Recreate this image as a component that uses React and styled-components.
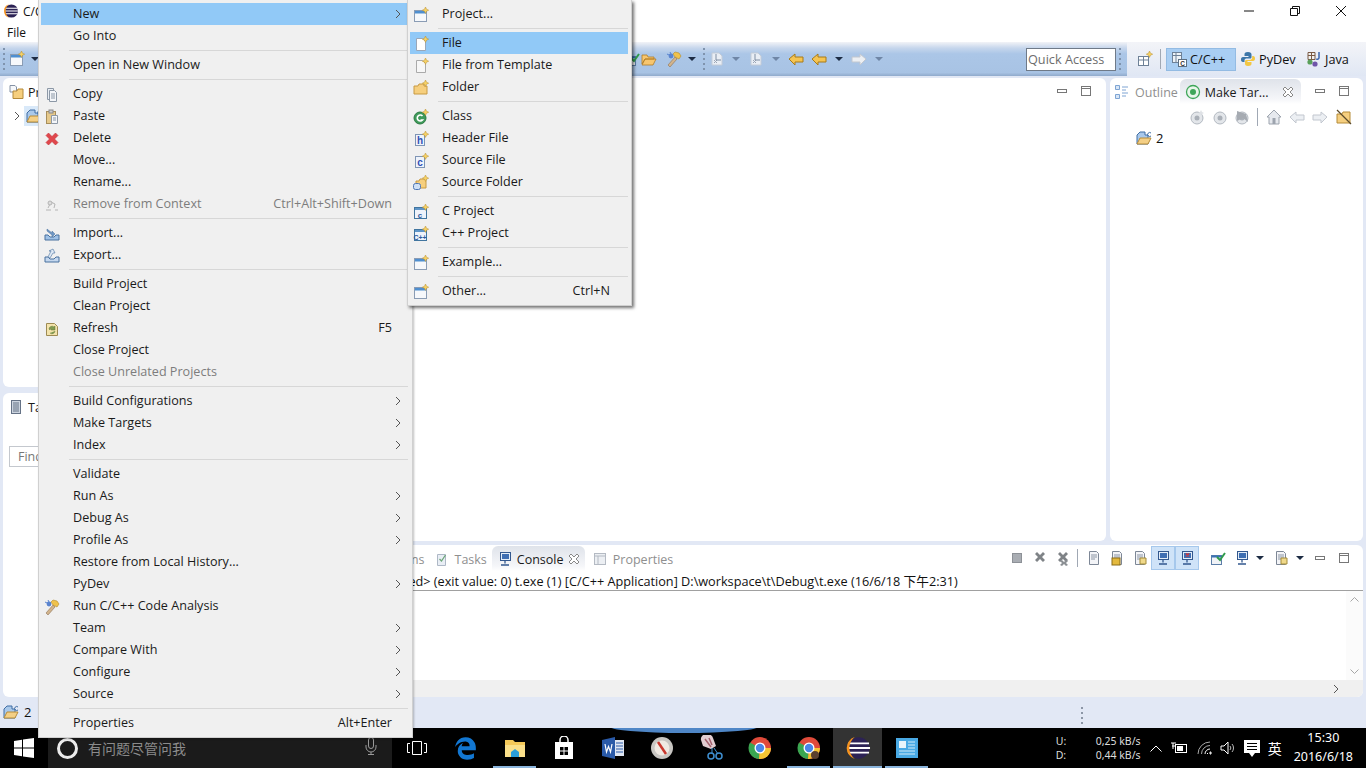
import React from 'react'
import styled, { createGlobalStyle } from 'styled-components'
import { FaEdgeLegacy } from 'react-icons/fa'

const Global = createGlobalStyle`
  html, body { margin: 0; padding: 0; overflow: hidden; }
  body { font-family: "Open Sans", "Noto Sans", "Noto Sans CJK SC", sans-serif; font-size: 12px; color: #111; }
`

/* ---------- drawn icons ---------- */
const Svg = ({ s = 16, children }) => <svg width={s} height={s} viewBox="0 0 16 16" style={{ display: 'block', flex: 'none' }}>{children}</svg>
const Star = () => <path d="M12.5 0l1 2.2 2.2 1-2.2 1-1 2.2-1-2.2-2.2-1 2.2-1z" fill="#f7d264" stroke="#b98f2c" strokeWidth=".5" />
const Wizard = () => <Svg><rect x="1.5" y="3.5" width="12" height="11" fill="#f6f8fb" stroke="#8a9cb4" /><rect x="2" y="4" width="11" height="2.5" fill="#4f8fd0" /><Star /></Svg>
const FileNew = ({ pale }) => <Svg><path d="M3.5 2.5h6l3 3v9h-9z" fill={pale ? '#f7f7f7' : '#fff'} stroke={pale ? '#aaa' : '#9aa7b8'} /><Star /></Svg>
const FolderNew = () => <Svg><path d="M1 6h4l1-2h5v2h3v8H1z" fill="#f6cf7e" stroke="#c89a42" /><Star /></Svg>
const ClassNew = () => <Svg><circle cx="7" cy="9" r="6" fill="#3f9a5a" stroke="#2a7a42" /><path d="M9.5 7a3 3 0 1 0 0 4H7.5" fill="none" stroke="#fff" strokeWidth="1.6" /><Star /></Svg>
const LetterNew = ({ ch }) => <Svg><rect x="2.5" y="3.5" width="9" height="11" fill="#eef3fb" stroke="#7f95b5" /><text x="7" y="13" fontSize="10" fontWeight="700" fontFamily="Liberation Sans" textAnchor="middle" fill="#2f4fb5">{ch}</text><Star /></Svg>
const SourceFolder = () => <Svg><path d="M3 6h3l1-2h6v9H3z" fill="#f6cf7e" stroke="#c89a42" /><rect x=".5" y="8.5" width="7" height="6" rx="2" fill="#cfe0f5" stroke="#4d76b5" /><Star /></Svg>
const CProject = ({ ch }) => <Svg><rect x="1.5" y="3.5" width="12" height="11" fill="#eef3fb" stroke="#41759f" /><rect x="2" y="4" width="11" height="2" fill="#5e95c8" /><text x="7" y="13.5" fontSize={ch.length > 1 ? 7 : 8} fontWeight="700" fontFamily="Liberation Sans" textAnchor="middle" fill="#2d5a9e">{ch}</text><Star /></Svg>
const Copy = () => <Svg><path d="M3.5 1.5h6v11h-6z" fill="#e8edf3" stroke="#8c98a6" /><path d="M5.5 3.5h5l2 2v9h-7z" fill="#f4f6f9" stroke="#8c98a6" /><path d="M7 7h4M7 9h4M7 11h4" stroke="#8c98a6" /></Svg>
const Paste = () => <Svg><rect x="2.5" y="2.5" width="9" height="12" fill="#e6c98b" stroke="#a78e5b" /><rect x="5" y="1" width="4" height="3" fill="#c9ccd1" stroke="#888" /><path d="M7.5 6.5h6v8h-6z" fill="#f4f6f9" stroke="#8c98a6" /><path d="M9 9h3M9 11h3" stroke="#8c98a6" /></Svg>
const Delete = () => <Svg><path d="M2 4.5L4.5 2 8 5.5 11.5 2 14 4.5 10.5 8 14 11.5 11.5 14 8 10.5 4.5 14 2 11.5 5.5 8z" fill="#e0474c" stroke="#c23238" strokeWidth=".6" /></Svg>
const RemoveCtx = () => <Svg><path d="M4 11l3-6 4 2-1 4M2 13h5M11 13h3" fill="none" stroke="#b4b4b4" /><circle cx="6" cy="6" r="2" fill="#ddd" stroke="#b4b4b4" /></Svg>
const ImportIc = () => <Svg><path d="M1 9h3l2 2h4l2-2h3v5H1z" fill="#9fc1e6" stroke="#48719e" /><path d="M3 3l5 4V5l3 3-3 3V9L3 5z" fill="#6e96c4" stroke="#48719e" strokeWidth=".5" /></Svg>
const ExportIc = () => <Svg><path d="M1 9h3l2 2h4l2-2h3v5H1z" fill="#c4d7ee" stroke="#48719e" /><path d="M4 9L7 3H5l4-2 2 4H9L6 10z" fill="#dfe9f5" stroke="#48719e" strokeWidth=".6" /></Svg>
const Refresh = () => <Svg><path d="M2.5 2.5h8l3 3v9h-11z" fill="#f3e3ab" stroke="#9d8a53" /><path d="M5 8a3 3 0 0 1 5-2l1-1v4H7l1-1a1.500 1.500 0 0 0-2 1zM11 10a3 3 0 0 1-5 2" fill="#7f9a4f" stroke="#62773a" strokeWidth=".5" /></Svg>
const Wand = ({ dim }) => <Svg><path d="M2 14L9 6l2 2-7 8z" fill={dim ? '#f2ead8' : '#d2b48c'} stroke="#8d7255" strokeWidth=".6" /><path d="M9 1l4 1 2 3-2 3-4-2-2-3z" fill="#f0c24b" stroke="#b18a2b" strokeWidth=".6" /><circle cx="5" cy="5" r="2.400" fill="#5a84cf" /><path d="M1 3l2 1M4 1l1 2" stroke="#5a84cf" /></Svg>
const FolderOpen = () => <Svg><path d="M1 13V4h5l1 2h6v2H4l-3 5zM1 14l3-6h11l-3 6z" fill="#f7c66f" stroke="#b17c24" strokeWidth=".8" /></Svg>
const CFolder = () => <Svg><path d="M1 14V5l3-3h5v3h3v9z" fill="#a9c8ea" stroke="#3f6da4" /><path d="M1 14l3-6h11l-3 6z" fill="#f4cf85" stroke="#b78c39" /><path d="M15 3a2 2 0 1 0 0 3" fill="none" stroke="#3f6da4" /></Svg>
const ArrowL = ({ c = '#f5c451', b = '#a87b18' }) => <Svg><path d="M1 8l6-5v3h8v5H7v3z" fill={c} stroke={b} /></Svg>
const ArrowR = ({ c = '#eceff3', b = '#c2c7cf' }) => <Svg><path d="M15 8L9 3v3H1v5h8v3z" fill={c} stroke={b} /></Svg>
const PageGhost = () => <Svg><path d="M3 2h7l3 3v9H3z" fill="#e9eef5" stroke="#c4ccd7" /><path d="M5 9l3 3M8 9l-3 3" stroke="#9ca7b7" /><path d="M7 3v6h5" stroke="#7f8ea3" fill="none" /></Svg>
const Eclipse = ({ s = 16 }) => <Svg s={s}><circle cx="8.400" cy="8" r="6.600" fill="#2c2255" /><path d="M2 5.200h12.800M1.400 8h14M2 10.800h12.800" stroke="#fff" strokeWidth="1.100" /><path d="M6 1.300A7 7 0 0 0 6 14.700 8.400 8.400 0 0 1 6 1.300z" fill="#f7941e" /></Svg>
const ProjectExp = () => <Svg><path d="M2 1.500h5l1.500 1.500v5H2z" fill="#f6f8fb" stroke="#8592a5" /><path d="M5 7h4l1-2h5v9.500H5z" fill="#f6cf7e" stroke="#b48a3a" /></Svg>
const Tasklist = () => <Svg><rect x="3.500" y="1.500" width="9" height="13" fill="#ccd4df" stroke="#657286" /><path d="M5 4h6M5 6h6M5 8h6M5 10h6M5 12h6" stroke="#657286" /></Svg>
const MakeTarget = () => <Svg><circle cx="8" cy="8" r="6.500" fill="#e8f5ea" stroke="#3fa659" strokeWidth="1.300" /><circle cx="8" cy="8" r="3" fill="#3fa659" /></Svg>
const OutlineIc = () => <Svg><path d="M1.500 1.500h4v4h-4zM1.500 10.500h4v4h-4z" fill="#d8e6f6" stroke="#7ea4d3" /><path d="M8 3h6M8 6h4M8 9h6M8 12h4" stroke="#7ea4d3" /></Svg>
const TargetGrey = ({ kind }) => <Svg><circle cx="8" cy="9" r="6" fill="#e3e6ea" stroke="#b2b8c0" /><circle cx="8" cy="9" r="2.500" fill="#aab0b8" />{kind === 1 && <path d="M12 1l1 2 2 1-2 1-1 2-1-2-2-1 2-1z" fill="#dfe2e6" />}{kind === 2 && <path d="M3 2l9 3 2 8-5-4-6 3z" fill="#a6abb2" />}</Svg>
const Home = () => <Svg><path d="M8 1l7 7h-2v7H3V8H1z" fill="#e6e9ee" stroke="#9da4ae" /><rect x="6.500" y="9" width="3" height="6" fill="#9da4ae" /></Svg>
const NoFolder = () => <Svg><path d="M1 5h5l1-2h7v11H1z" fill="#f5cf80" stroke="#b58b39" /><path d="M1 1l14 14" stroke="#5b4a2a" strokeWidth="1.300" /></Svg>
const OpenPersp = () => <Svg><rect x="1.500" y="5.500" width="10" height="9" fill="#fff" stroke="#6e8197" /><path d="M1.500 9h10M6.500 5.500v9" stroke="#6e8197" /><Star /></Svg>
const CPersp = () => <Svg><rect x="1.500" y="1.500" width="9" height="10" fill="#eef3f8" stroke="#6e8197" /><path d="M1.500 4.500h9M5 1.500v10" stroke="#6e8197" /><rect x="7.500" y="8.500" width="8" height="7" fill="#fff" stroke="#5c7084" /><text x="11.500" y="14.500" fontSize="6.500" fontWeight="700" fontFamily="Liberation Sans" textAnchor="middle" fill="#333">C</text></Svg>
const Python = () => <Svg><path d="M8 1C5 1 4.500 2 4.500 3.500V5H8.500v1H3C1.500 6 1 7 1 8.500S1.500 11 3 11h1.500V9.500C4.500 8 5.500 7.500 7 7.500h3c1 0 1.500-.5 1.500-1.500V3.500C11.500 2 10.500 1 8 1z" fill="#3d76a8" /><path d="M8 15c3 0 3.500-1 3.500-2.500V11H7.500v-1H13c1.500 0 2-1 2-2.500S14.500 5 13 5h-.8v1.500c0 1.500-1 2.500-2.500 2.500H6.500c-1 0-1.500.5-1.500 1.500v2C5 14 5.500 15 8 15z" fill="#f3c743" /></Svg>
const JavaP = () => <Svg><path d="M2 1.500h7v7H2zM2 4.500h7M5.500 1.500v7" fill="#f0f0f0" stroke="#7a5a45" /><path d="M13 1v6a2 2 0 0 1-3 1" fill="none" stroke="#3a66b0" strokeWidth="1.500" /><circle cx="4" cy="11" r="2.600" fill="#5aa05a" /><circle cx="9" cy="13" r="2.600" fill="#6f55a8" /></Svg>
const Stop = () => <Svg><rect x="3.500" y="3.500" width="9" height="9" fill="#a9adb3" stroke="#8d9197" /></Svg>
const GreyX = ({ two }) => <Svg><path d="M3 4l2-2 3 3 3-3 2 2-3 3 3 3-2 2-3-3-3 3-2-2 3-3z" fill="#7f8387" />{two && <path d="M5 11l2-1 2 2 2-2 2 1-2 2 2 2-2 1-2-2-2 2-2-1 2-2z" fill="#8c9094" />}</Svg>
const Doc = ({ mark }) => <Svg><path d="M3.500 1.500h7l2 2v11h-9z" fill="#f3f4f7" stroke="#7d8796" /><path d="M5 5h6M5 7h6M5 9h4" stroke="#8b95a4" />{mark === 'lock' && <rect x="3" y="8" width="8" height="7" fill="#e4b93d" stroke="#8b6d19" />}{mark === 'pin' && <path d="M8 8h6v6H8z" fill="#f0d98a" stroke="#a38b3a" />}{mark === 'x' && <path d="M9 11l4 4M13 11l-4 4" stroke="#555" strokeWidth="1.400" />}</Svg>
const ConsoleIc = ({ mark }) => <Svg><rect x="3.500" y="1.500" width="10" height="8" fill="#e3edf8" stroke="#33588e" /><path d="M8 9.500v3M4 14h8" stroke="#33588e" strokeWidth="1.300" /><rect x="5" y="3" width="7" height="5" fill="#3e6eb2" />{mark === 'x' && <path d="M7 3.500l3 3M10 3.500l-3 3" stroke="#d33" strokeWidth="1.400" />}</Svg>
const Pin = () => <Svg><rect x="1.500" y="5.500" width="10" height="9" fill="#f1f3f7" stroke="#5c7ea8" /><path d="M1.500 5.500h10v2h-10z" fill="#3b73b5" /><path d="M7 7l3 3 5-7" fill="none" stroke="#2f9b4b" strokeWidth="2" /></Svg>
const Props = () => <Svg><rect x="2.500" y="2.500" width="11" height="11" fill="#eceff3" stroke="#b4bac3" /><path d="M2.500 5h11M6 5v8.500" stroke="#b4bac3" /></Svg>
const TasksIc = () => <Svg><path d="M3.500 3.500h8v11h-8z" fill="#e9eef5" stroke="#aeb8c6" /><path d="M5.500 8l2 2 4-6" fill="none" stroke="#6ea77a" strokeWidth="1.300" /></Svg>

const Chevron = () => <svg width="6" height="10" viewBox="0 0 6 10" style={{ display: 'block' }}><path d="M1 1l4 4-4 4" fill="none" stroke="#555" /></svg>
const Drop = ({ pale }) => <svg width="8" height="4" viewBox="0 0 8 4" style={{ display: 'block', flex: 'none' }}><path d="M0 0h8L4 4z" fill={pale ? '#6f86a6' : '#1d2c44'} /></svg>
const MinI = () => <svg width="10" height="6" viewBox="0 0 10 6" style={{ display: 'block' }}><rect x=".5" y="1.500" width="9" height="3" fill="#fff" stroke="#777" /></svg>
const MaxI = () => <svg width="10" height="10" viewBox="0 0 10 10" style={{ display: 'block' }}><rect x=".5" y=".5" width="9" height="9" fill="#fff" stroke="#777" /><path d="M.5 2.500h9" stroke="#777" /></svg>
const CloseTab = () => <svg width="12" height="12" viewBox="0 0 12 12" style={{ display: 'block' }}><path d="M1 3l2-2 3 3 3-3 2 2-3 3 3 3-2 2-3-3-3 3-2-2 3-3z" fill="#fff" stroke="#888" /></svg>

const Chrome = ({ badge }) => (
  <svg width="24" height="24" viewBox="0 0 24 24" style={{ display: 'block' }}>
    <circle cx="12" cy="12" r="11" fill="#e04a3a" />
    <path d="M12 12L2 6.500A11 11 0 0 0 11 23z" fill="#3aa651" />
    <path d="M12 12h11A11 11 0 0 1 11 23z" fill="#f5c533" />
    <circle cx="12" cy="12" r="5.500" fill="#fff" />
    <circle cx="12" cy="12" r="4.200" fill="#4a86e8" />
    {badge && <circle cx="18" cy="19" r="4" fill="#5a4030" />}
  </svg>
)

/* ---------- window frame ---------- */
const Page = styled.div`
  position: relative;
  width: 1366px;
  height: 768px;
  overflow: hidden;
  display: flex;
  flex-direction: column;
  background: #fff;
`
const TitleBar = styled.div`
  height: 22px;
  display: flex;
  align-items: center;
  padding-left: 3px;
  font-size: 12px;
  gap: 4px;
`
const WinButtons = styled.div`
  margin-left: auto;
  margin-right: 2px;
  display: flex;
  svg { display: block; }
`
const WinButton = styled.div`
  width: 46px;
  height: 20px;
  display: flex;
  align-items: center;
  justify-content: center;
`
const MenuBar = styled.div`
  height: 20px;
  display: flex;
  align-items: center;
  padding-left: 7px;
  font-size: 12px;
`
const ToolRow = styled.div`
  height: 34px;
  display: flex;
`
const MainTools = styled.div`
  flex: 0 0 1127px;
  display: flex;
  align-items: center;
  padding-left: 3px;
  box-sizing: border-box;
  background: linear-gradient(#f2f3f7 0, #c6d6ec 18%, #abc6e7 35%, #a8c3e4 90%, #90aacb 100%);
`
const PerspTools = styled.div`
  flex: 1;
  display: flex;
  align-items: center;
  background: linear-gradient(#f3f4f8, #e0e7f4);
`
const Slot = styled.div`
  margin-left: ${p => p.$ml || 0}px;
  flex: none;
  display: flex;
  align-items: center;
  justify-content: center;
`
const Grip = styled.div`
  margin-left: ${p => p.$ml || 0}px;
  width: 2px;
  height: 22px;
  margin-right: 2px;
  flex: none;
  background: repeating-linear-gradient(#7f93ad 0 2px, transparent 2px 5px);
`
const QuickAccess = styled.div`
  margin-left: 143px;
  width: 90px;
  height: 23px;
  box-sizing: border-box;
  flex: none;
  border: 1px solid #6f7a88;
  background: #fff;
  color: #6d6d6d;
  font-size: 12.700px;
  line-height: 21px;
  padding-left: 1px;
  white-space: nowrap;
  overflow: hidden;
`
const VRule = styled.div`
  margin-left: ${p => p.$ml || 0}px;
  width: 1px;
  height: ${p => p.$h || 20}px;
  background: #a0a8b4;
  flex: none;
`
const Persp = styled.div`
  margin-left: ${p => p.$ml || 0}px;
  width: ${p => p.$w}px;
  height: 23px;
  box-sizing: border-box;
  flex: none;
  display: flex;
  align-items: center;
  gap: ${p => p.$gap || 3}px;
  padding-left: ${p => p.$pl || 4}px;
  font-size: 12.700px;
  white-space: nowrap;
  background: ${p => (p.$on ? '#a9cef3' : 'transparent')};
  border: 1px solid ${p => (p.$on ? '#93bbe3' : 'transparent')};
`

/* ---------- workspace ---------- */
const Workspace = styled.div`
  height: 624px;
  box-sizing: border-box;
  padding: 2px 3px 3px;
  background: #e2e8f5;
  display: grid;
  grid-template-columns: 300px 799px 253px;
  grid-template-rows: 463px 152px;
  column-gap: 4px;
  row-gap: 4px;
`
const LeftCol = styled.div`
  grid-row: 1 / 3;
  display: flex;
  flex-direction: column;
  gap: 6px;
`
const Panel = styled.section`
  flex: ${p => p.$flex || 'none'};
  height: ${p => (p.$h ? p.$h + 'px' : 'auto')};
  grid-column: ${p => p.$span || 'auto'};
  background: #fff;
  border-radius: 6px;
  overflow: hidden;
  display: flex;
  flex-direction: column;
  min-height: 0;
`
const PanelHead = styled.div`
  height: 26px;
  flex: none;
  display: flex;
  align-items: center;
  position: relative;
  padding-left: ${p => p.$pl || 0}px;
`
const Tab = styled.div`
  margin-left: ${p => p.$ml || 0}px;
  width: ${p => (p.$w ? p.$w + 'px' : 'auto')};
  height: 25px;
  box-sizing: border-box;
  margin-top: 1px;
  padding-top: 1px;
  display: flex;
  align-items: center;
  gap: ${p => p.$gap ?? 4}px;
  padding-left: ${p => p.$px ?? 4}px;
  padding-right: ${p => p.$px ?? 4}px;
  flex: none;
  font-size: 12.500px;
  white-space: nowrap;
  color: ${p => (p.$muted ? '#8f8f8f' : '#1a1a1a')};
  border-radius: 6px 6px 0 0;
  background: ${p => (p.$on ? 'linear-gradient(#dfe3ea, #f5f6f9 80%, #fff)' : 'transparent')};
`
const TabClose = styled.div`
  margin-left: auto;
  margin-right: 2px;
`
const HeadTools = styled.div`
  margin-left: auto;
  display: flex;
  align-items: center;
  padding-right: ${p => p.$pr || 10}px;
`
const WinIcons = styled.div`
  display: flex;
  align-items: center;
  width: ${p => p.$w || 34}px;
  justify-content: space-between;
  margin-left: ${p => p.$ml || 0}px;
`
const TreeRow = styled.div`
  display: flex;
  align-items: center;
  height: 22px;
  margin-left: ${p => p.$ml || 0}px;
  margin-top: ${p => p.$mt || 0}px;
  gap: ${p => p.$gap || 6}px;
  font-size: 13px;
`
const TreeIcon = styled.div`
  background: ${p => (p.$sel ? '#d9e9f9' : 'transparent')};
  padding: 2px;
`
const ViewTools = styled.div`
  height: 21px;
  padding: 2px 11px 0 0;
  display: flex;
  align-items: center;
  justify-content: flex-end;
`
const FilterBox = styled.div`
  margin: 27px 0 0 6px;
  width: 260px;
  height: 21px;
  box-sizing: border-box;
  border: 1px solid #c4c8ce;
  color: #777;
  font-size: 12.500px;
  line-height: 19px;
  padding-left: 8px;
`
const ConsoleInfo = styled.div`
  height: 20px;
  flex: none;
  box-sizing: border-box;
  border-bottom: 1px solid #a0a0a0;
  font-size: 12.700px;
  line-height: 20px;
  padding-left: ${p => p.$pl}px;
  white-space: nowrap;
  font-family: "Open Sans", "Noto Sans CJK SC", sans-serif;
`
const ConsoleBody = styled.div`
  flex: 1;
  display: flex;
  min-height: 0;
`
const ConsoleText = styled.div`
  flex: 1;
`
const VScroll = styled.div`
  width: 17px;
  display: flex;
  flex-direction: column;
  justify-content: space-between;
  align-items: center;
  padding: 6px 0;
  box-sizing: border-box;
  color: #a6a6a6;
  background: #fbfbfb;
  svg { display: block; }
`
const HScroll = styled.div`
  height: 17px;
  flex: none;
  background: #f0f0f0;
  display: flex;
  align-items: center;
  justify-content: flex-end;
  padding-right: 24px;
`
const StatusBar = styled.div`
  height: 28px;
  flex: none;
  box-sizing: border-box;
  background: #e2e8f5;
  display: flex;
  align-items: center;
  padding: 0 0 4px 3px;
  gap: 5px;
  font-size: 13px;
`
const StatusGrip = styled.div`
  margin-left: 1045px;
  margin-top: 7px;
  width: 2px;
  height: 18px;
  background: repeating-linear-gradient(#8c96a6 0 2px, transparent 2px 5px);
`

/* ---------- taskbar ---------- */
const Taskbar = styled.footer`
  height: 40px;
  flex: none;
  position: relative;
  background: #000;
  display: flex;
  color: #fff;
`
const StartBtn = styled.div`
  width: 48px;
  display: flex;
  align-items: center;
  justify-content: center;
`
const Search = styled.div`
  width: 344px;
  box-sizing: border-box;
  background: #1b1b1b;
  display: flex;
  align-items: center;
  padding: 0 15px 0 9px;
  gap: 10px;
  color: #8b8b8b;
  font-family: "Noto Sans CJK SC", sans-serif;
  font-size: 14px;
`
const Cortana = styled.div`
  width: 21px;
  height: 21px;
  box-sizing: border-box;
  border: 3px solid #ececec;
  border-radius: 50%;
  flex: none;
`
const MicWrap = styled.div`
  margin-left: auto;
`
const TaskItem = styled.div`
  width: 49px;
  height: 40px;
  box-sizing: border-box;
  display: flex;
  align-items: center;
  justify-content: center;
  position: relative;
  background: ${p => (p.$active ? '#333' : 'transparent')};
  &::after {
    content: '';
    display: ${p => (p.$open ? 'block' : 'none')};
    position: absolute;
    left: ${p => (p.$active ? 0 : 3)}px;
    right: ${p => (p.$active ? 0 : 3)}px;
    bottom: 0;
    height: 2px;
    background: #8ab4dc;
  }
`
const Arc = styled.div`
  position: absolute;
  left: 608px;
  top: 0;
  width: 152px;
  height: 5px;
  overflow: hidden;
  &::before {
    content: '';
    display: block;
    height: 14px;
    margin-top: -9px;
    border-radius: 50%;
    background: #4f86c6;
  }
`
const Tray = styled.div`
  margin-left: auto;
  display: flex;
  align-items: center;
  padding-right: 13px;
`
const NetLabels = styled.div`
  display: grid;
  grid-template-columns: 40px auto;
  font-size: 10.500px;
  line-height: 14px;
  color: #dcdcdc;
  font-family: "Noto Sans", sans-serif;
`
const TrayIcon = styled.div`
  margin-left: ${p => p.$ml || 0}px;
  display: flex;
  align-items: center;
  font-family: "Noto Sans CJK SC", sans-serif;
  font-size: 14px;
`
const Clock = styled.div`
  margin-left: 12px;
  padding-bottom: 2px;
  text-align: center;
  font-size: 12.500px;
  line-height: 19px;
  font-family: "Noto Sans", sans-serif;
`

/* ---------- context menus ---------- */
const Menu = styled.div`
  position: absolute;
  top: 0;
  left: ${p => p.$left}px;
  width: ${p => p.$width}px;
  box-sizing: border-box;
  padding: 3px ${p => p.$pr}px 3px 2px;
  background: #f0f0f0;
  border: 1px solid #d0d0d0;
  border-top: none;
  box-shadow: ${p => p.$shadow};
  font-size: 12.600px;
  color: #1a1a1a;
  z-index: ${p => p.$z};
`
const Row = styled.div`
  height: 22px;
  display: flex;
  align-items: center;
  white-space: nowrap;
  background: ${p => (p.$hot ? '#91c9f7' : 'transparent')};
  color: ${p => (p.$off ? '#7d7d7d' : 'inherit')};
`
const IconSlot = styled.div`
  width: 32px;
  box-sizing: border-box;
  padding: 2px 0 0 3px;
  flex: none;
`
const RowLabel = styled.div`
  flex: 1;
  padding-bottom: 2px;
`
const Shortcut = styled.div`
  padding: 0 ${p => p.$pr || 16}px 2px 0;
`
const ArrowSlot = styled.div`
  padding-right: 7px;
`
const Sep = styled.div`
  height: 7px;
  margin-left: 28px;
  box-sizing: border-box;
  padding-top: 3px;
  &::before {
    content: '';
    display: block;
    height: 1px;
    background: #d7d7d7;
  }
`
const ToggleBtn = styled.div`
  margin-left: ${p => p.$ml || 0}px;
  padding: 3px;
  background: #cfe3f8;
  border: 1px solid #a6c8ec;
`

const mainMenu = [
  { t: 'New', arrow: 1, hot: 1 }, { t: 'Go Into' }, '-',
  { t: 'Open in New Window' }, '-',
  { t: 'Copy', i: <Copy /> }, { t: 'Paste', i: <Paste /> }, { t: 'Delete', i: <Delete /> }, { t: 'Move...' }, { t: 'Rename...' },
  { t: 'Remove from Context', i: <RemoveCtx />, off: 1, key: 'Ctrl+Alt+Shift+Down' }, '-',
  { t: 'Import...', i: <ImportIc /> }, { t: 'Export...', i: <ExportIc /> }, '-',
  { t: 'Build Project' }, { t: 'Clean Project' }, { t: 'Refresh', i: <Refresh />, key: 'F5' }, { t: 'Close Project' }, { t: 'Close Unrelated Projects', off: 1 }, '-',
  { t: 'Build Configurations', arrow: 1 }, { t: 'Make Targets', arrow: 1 }, { t: 'Index', arrow: 1 }, '-',
  { t: 'Validate' }, { t: 'Run As', arrow: 1 }, { t: 'Debug As', arrow: 1 }, { t: 'Profile As', arrow: 1 }, { t: 'Restore from Local History...' }, { t: 'PyDev', arrow: 1 },
  { t: 'Run C/C++ Code Analysis', i: <Wand /> }, { t: 'Team', arrow: 1 }, { t: 'Compare With', arrow: 1 }, { t: 'Configure', arrow: 1 }, { t: 'Source', arrow: 1 }, '-',
  { t: 'Properties', key: 'Alt+Enter' },
]
const newMenu = [
  { t: 'Project...', i: <Wizard /> }, '-',
  { t: 'File', i: <FileNew />, hot: 1 }, { t: 'File from Template', i: <FileNew pale /> }, { t: 'Folder', i: <FolderNew /> }, '-',
  { t: 'Class', i: <ClassNew /> }, { t: 'Header File', i: <LetterNew ch="h" /> }, { t: 'Source File', i: <LetterNew ch="c" /> }, { t: 'Source Folder', i: <SourceFolder /> }, '-',
  { t: 'C Project', i: <CProject ch="c" /> }, { t: 'C++ Project', i: <CProject ch="C++" /> }, '-',
  { t: 'Example...', i: <Wizard /> }, '-',
  { t: 'Other...', i: <Wizard />, key: 'Ctrl+N', keyPad: 18 },
]

const MenuRows = ({ items }) => items.map((m, i) => (m === '-'
  ? <Sep key={i} />
  : (
    <Row key={i} $hot={m.hot} $off={m.off}>
      <IconSlot>{m.i}</IconSlot>
      <RowLabel>{m.t}</RowLabel>
      {m.key && <Shortcut $pr={m.keyPad}>{m.key}</Shortcut>}
      {m.arrow && <ArrowSlot><Chevron /></ArrowSlot>}
    </Row>
  )))

const consoleTools = [
  [<Stop />, 0], [<GreyX />, 7], [<GreyX two />, 7], null,
  [<Doc />, 8], [<Doc mark="lock" />, 7], [<Doc mark="pin" />, 7],
]

export default function App() {
  return (
    <Page>
      <Global />
      <TitleBar>
        <Eclipse />
        <span>C/C</span>
        <WinButtons>
          <WinButton><svg width="10" height="10" viewBox="0 0 10 10"><path d="M0 5h10" stroke="#111" /></svg></WinButton>
          <WinButton><svg width="10" height="10" viewBox="0 0 10 10"><path d="M2.500 2.500V.5h7v7h-2M.5 2.500h7v7h-7z" fill="none" stroke="#111" /></svg></WinButton>
          <WinButton><svg width="10" height="10" viewBox="0 0 10 10"><path d="M0 0l10 10M10 0L0 10" stroke="#111" /></svg></WinButton>
        </WinButtons>
      </TitleBar>
      <MenuBar>File</MenuBar>
      <ToolRow>
        <MainTools>
          <Grip />
          <Slot $ml={2}><Wizard /></Slot>
          <Slot $ml={6}><Drop /></Slot>
          <Slot $ml={585}><Pin /></Slot>
          <Slot $ml={1}><FolderOpen /></Slot>
          <Slot $ml={9}><Wand /></Slot>
          <Slot $ml={6}><Drop /></Slot>
          <Grip $ml={7} />
          <Slot $ml={2}><PageGhost /></Slot>
          <Slot $ml={7}><Drop pale /></Slot>
          <Slot $ml={8}><PageGhost /></Slot>
          <Slot $ml={8}><Drop pale /></Slot>
          <Slot $ml={8}><ArrowL /></Slot>
          <Slot $ml={7}><ArrowL /></Slot>
          <Slot $ml={8}><Drop /></Slot>
          <Slot $ml={8}><ArrowR /></Slot>
          <Slot $ml={8}><Drop pale /></Slot>
          <QuickAccess>Quick Access</QuickAccess>
          <Grip $ml={3} />
        </MainTools>
        <PerspTools>
          <Slot $ml={10}><OpenPersp /></Slot>
          <VRule $ml={7} />
          <Persp $ml={5} $w={70} $on><CPersp />C/C++</Persp>
          <Persp $w={60} $pl={3}><Python />PyDev</Persp>
          <Persp $ml={5} $w={50} $pl={0}><JavaP />Java</Persp>
        </PerspTools>
      </ToolRow>
      <Workspace>
        <LeftCol>
          <Panel $h={309}>
            <PanelHead $pl={1}>
              <Tab><ProjectExp />Pr</Tab>
            </PanelHead>
            <TreeRow $ml={11} $mt={1} $gap={4}>
              <Chevron />
              <TreeIcon $sel><CFolder /></TreeIcon>
            </TreeRow>
          </Panel>
          <Panel $flex="1">
            <PanelHead $pl={1}>
              <Tab><Tasklist />Ta</Tab>
            </PanelHead>
            <FilterBox>Find</FilterBox>
          </Panel>
        </LeftCol>
        <Panel>
          <PanelHead>
            <HeadTools $pr={15}><WinIcons><MinI /><MaxI /></WinIcons></HeadTools>
          </PanelHead>
        </Panel>
        <Panel>
          <PanelHead $pl={4}>
            <Tab $muted $px={0} $gap={5}><OutlineIc />Outline</Tab>
            <Tab $on $ml={2} $w={121} $px={5}><MakeTarget />Make Tar...<TabClose><CloseTab /></TabClose></Tab>
            <HeadTools $pr={14}><WinIcons><MinI /><MaxI /></WinIcons></HeadTools>
          </PanelHead>
          <ViewTools>
            <TargetGrey kind={1} />
            <Slot $ml={7}><TargetGrey /></Slot>
            <Slot $ml={6}><TargetGrey kind={2} /></Slot>
            <VRule $ml={7} $h={18} />
            <Slot $ml={8}><Home /></Slot>
            <Slot $ml={7}><ArrowL c="#eceff3" b="#c2c7cf" /></Slot>
            <Slot $ml={7}><ArrowR /></Slot>
            <Slot $ml={8}><NoFolder /></Slot>
          </ViewTools>
          <TreeRow $ml={26} $gap={4}>
            <CFolder />2
          </TreeRow>
        </Panel>
        <Panel $span="2 / 4">
          <PanelHead>
            <Tab $muted $ml={42} $px={0} $gap={4}><Svg />Problems</Tab>
            <Tab $muted $ml={9} $px={0} $gap={5}><TasksIc />Tasks</Tab>
            <Tab $on $ml={5} $w={93} $px={5} $gap={4}><ConsoleIc />Console<TabClose><CloseTab /></TabClose></Tab>
            <Tab $muted $ml={7} $px={0} $gap={5}><Props />Properties</Tab>
            <HeadTools $pr={14}>
              {consoleTools.map((c, i) => (c
                ? <Slot key={i} $ml={c[1]}>{c[0]}</Slot>
                : <VRule key={i} $ml={6} $h={18} />))}
              <ToggleBtn $ml={3}><ConsoleIc /></ToggleBtn>
              <ToggleBtn><ConsoleIc mark="x" /></ToggleBtn>
              <Slot $ml={11}><Pin /></Slot>
              <Slot $ml={8}><ConsoleIc /></Slot>
              <Slot $ml={6}><Drop /></Slot>
              <Slot $ml={9}><Doc mark="pin" /></Slot>
              <Slot $ml={7}><Drop /></Slot>
              <WinIcons $ml={11}><MinI /><MaxI /></WinIcons>
            </HeadTools>
          </PanelHead>
          <ConsoleInfo $pl={43}>{'<terminated> (exit value: 0) t.exe (1) [C/C++ Application] D:\\workspace\\t\\Debug\\t.exe (16/6/18 下午2:31)'}</ConsoleInfo>
          <ConsoleBody>
            <ConsoleText />
            <VScroll>
              <svg width="9" height="5" viewBox="0 0 9 5"><path d="M.5 4.500l4-4 4 4" fill="none" stroke="currentColor" /></svg>
              <svg width="9" height="5" viewBox="0 0 9 5"><path d="M.5.5l4 4 4-4" fill="none" stroke="currentColor" /></svg>
            </VScroll>
          </ConsoleBody>
          <HScroll><Chevron /></HScroll>
        </Panel>
      </Workspace>
      <StatusBar>
        <CFolder />2
        <StatusGrip />
      </StatusBar>
      <Taskbar>
        <StartBtn>
          <svg width="20" height="20" viewBox="0 0 20 20"><path d="M0 3l8-1.200V9.500H0zM9 1.600L20 0v9.500H9zM0 10.500h8v7.700L0 17zM9 10.500h11V20L9 18.400z" fill="#fff" /></svg>
        </StartBtn>
        <Search>
          <Cortana />
          有问题尽管问我
          <MicWrap><svg width="12" height="18" viewBox="0 0 12 18"><rect x="3.500" y=".5" width="5" height="11" rx="2.500" fill="none" stroke="#9a9a9a" /><path d="M1 8v2a5 5 0 0 0 10 0V8M6 15v2M3 17.500h6" fill="none" stroke="#9a9a9a" /></svg></MicWrap>
        </Search>
        <TaskItem>
          <svg width="20" height="16" viewBox="0 0 20 16"><path d="M5.500 1.500h9v13h-9zM3 3.500H.5v9H3M17 3.500h2.500v9H17" fill="none" stroke="#fff" /></svg>
        </TaskItem>
        <TaskItem><FaEdgeLegacy size={23} color="#1277d2" /></TaskItem>
        <TaskItem $open>
          <svg width="22" height="22" viewBox="0 0 22 22"><path d="M1 3h8l2 2h10v15H1z" fill="#f5c959" /><path d="M1 8h20v12H1z" fill="#fbe08a" /><path d="M7 20v-5l4-3 4 3v5z" fill="#2b9ed8" /></svg>
        </TaskItem>
        <TaskItem>
          <svg width="20" height="24" viewBox="0 0 20 24"><path d="M1 6h18v17H1z" fill="#fff" /><path d="M6 6V4a4 4 0 0 1 8 0v2" fill="none" stroke="#fff" strokeWidth="1.500" /><path d="M6 11h3.500v3.500H6zM10.500 11H14v3.500h-3.500zM6 15.500h3.500V19H6zM10.500 15.500H14V19h-3.500z" fill="#000" /></svg>
        </TaskItem>
        <TaskItem>
          <svg width="22" height="22" viewBox="0 0 22 22"><path d="M0 3l13-3v22L0 19z" fill="#2a5aa8" /><path d="M13 3h9v16h-9z" fill="#dfe6f2" /><path d="M14 6h7M14 9h7M14 12h7M14 15h7" stroke="#2a5aa8" /><path d="M3 7l1.500 8L6.500 9.500 8.500 15 10 7" fill="none" stroke="#fff" strokeWidth="1.200" /></svg>
        </TaskItem>
        <TaskItem>
          <svg width="24" height="24" viewBox="0 0 24 24"><circle cx="12" cy="12" r="11" fill="#c8c6c2" /><circle cx="12" cy="12" r="7.500" fill="#efe9e2" /><path d="M8 6l8 12" stroke="#c8372d" strokeWidth="2.500" /></svg>
        </TaskItem>
        <TaskItem>
          <svg width="24" height="26" viewBox="0 0 24 26"><path d="M2 5a6 5 0 0 1 12-2l3 8-5 3-8-3z" fill="#e2cdd0" /><path d="M6 4l6 8M10 3l3 7" stroke="#a5606d" strokeWidth="1.500" /><circle cx="12" cy="21" r="3" fill="none" stroke="#3f8fd0" strokeWidth="1.500" /><circle cx="20" cy="21" r="3" fill="none" stroke="#3f8fd0" strokeWidth="1.500" /><path d="M13 13l0 6M15 13l4 6" stroke="#3f8fd0" /></svg>
        </TaskItem>
        <TaskItem><Chrome /></TaskItem>
        <TaskItem $open><Chrome badge /></TaskItem>
        <TaskItem $open $active><Eclipse s={26} /></TaskItem>
        <TaskItem $open>
          <svg width="22" height="20" viewBox="0 0 22 20"><rect width="22" height="20" fill="#49a9e4" /><rect x="3" y="3" width="7" height="7" fill="#e8f4fb" /><path d="M12 4h7M12 7h7M12 10h7M3 13h16M3 16h16" stroke="#d3ebf8" /></svg>
        </TaskItem>
        <Arc />
        <Tray>
          <NetLabels>
            <span>U:</span><span>0,25 kB/s</span>
            <span>D:</span><span>0,44 kB/s</span>
          </NetLabels>
          <TrayIcon $ml={9}><svg width="12" height="7" viewBox="0 0 12 7"><path d="M.5 6.500L6 1l5.500 5.500" fill="none" stroke="#fff" /></svg></TrayIcon>
          <TrayIcon $ml={9}><svg width="16" height="12" viewBox="0 0 16 12"><rect x="4.500" y="2.500" width="11" height="8" fill="none" stroke="#fff" /><rect x="6" y="4" width="6" height="5" fill="#fff" /><path d="M0 1h5M2 1v6M1 4h3" stroke="#fff" /></svg></TrayIcon>
          <TrayIcon $ml={10}><svg width="15" height="14" viewBox="0 0 15 14"><path d="M1 13A12 12 0 0 1 13 1M4.500 13A8.500 8.500 0 0 1 13 4.500" fill="none" stroke="#aaa" /><path d="M8 13a5 5 0 0 1 5-5" fill="none" stroke="#fff" /><path d="M13 11h1v2h-1zM10 12.500h1" stroke="#fff" /></svg></TrayIcon>
          <TrayIcon $ml={8}><svg width="15" height="14" viewBox="0 0 15 14"><path d="M1 5h3l4-4v12L4 9H1z" fill="none" stroke="#fff" /><path d="M10 5a3 3 0 0 1 0 4M12 3a6 6 0 0 1 0 8" fill="none" stroke="#bbb" /></svg></TrayIcon>
          <TrayIcon $ml={9}><svg width="16" height="17" viewBox="0 0 16 17"><path d="M0 0h16v13h-5l-3 4-3-4H0z" fill="#fff" /><path d="M3 3.500h10M3 6.500h10M3 9.500h10" stroke="#000" /></svg></TrayIcon>
          <TrayIcon $ml={8}>英</TrayIcon>
          <Clock>15:30<br />2016/6/18</Clock>
        </Tray>
      </Taskbar>

      <Menu $left={38} $width={375} $pr={4} $z={2} $shadow="1px 1px 2px rgba(0,0,0,.25)">
        <MenuRows items={mainMenu} />
      </Menu>
      <Menu $left={407} $width={225} $pr={3} $z={3} $shadow="2px 2px 3px rgba(0,0,0,.55)">
        <MenuRows items={newMenu} />
      </Menu>
    </Page>
  )
}
